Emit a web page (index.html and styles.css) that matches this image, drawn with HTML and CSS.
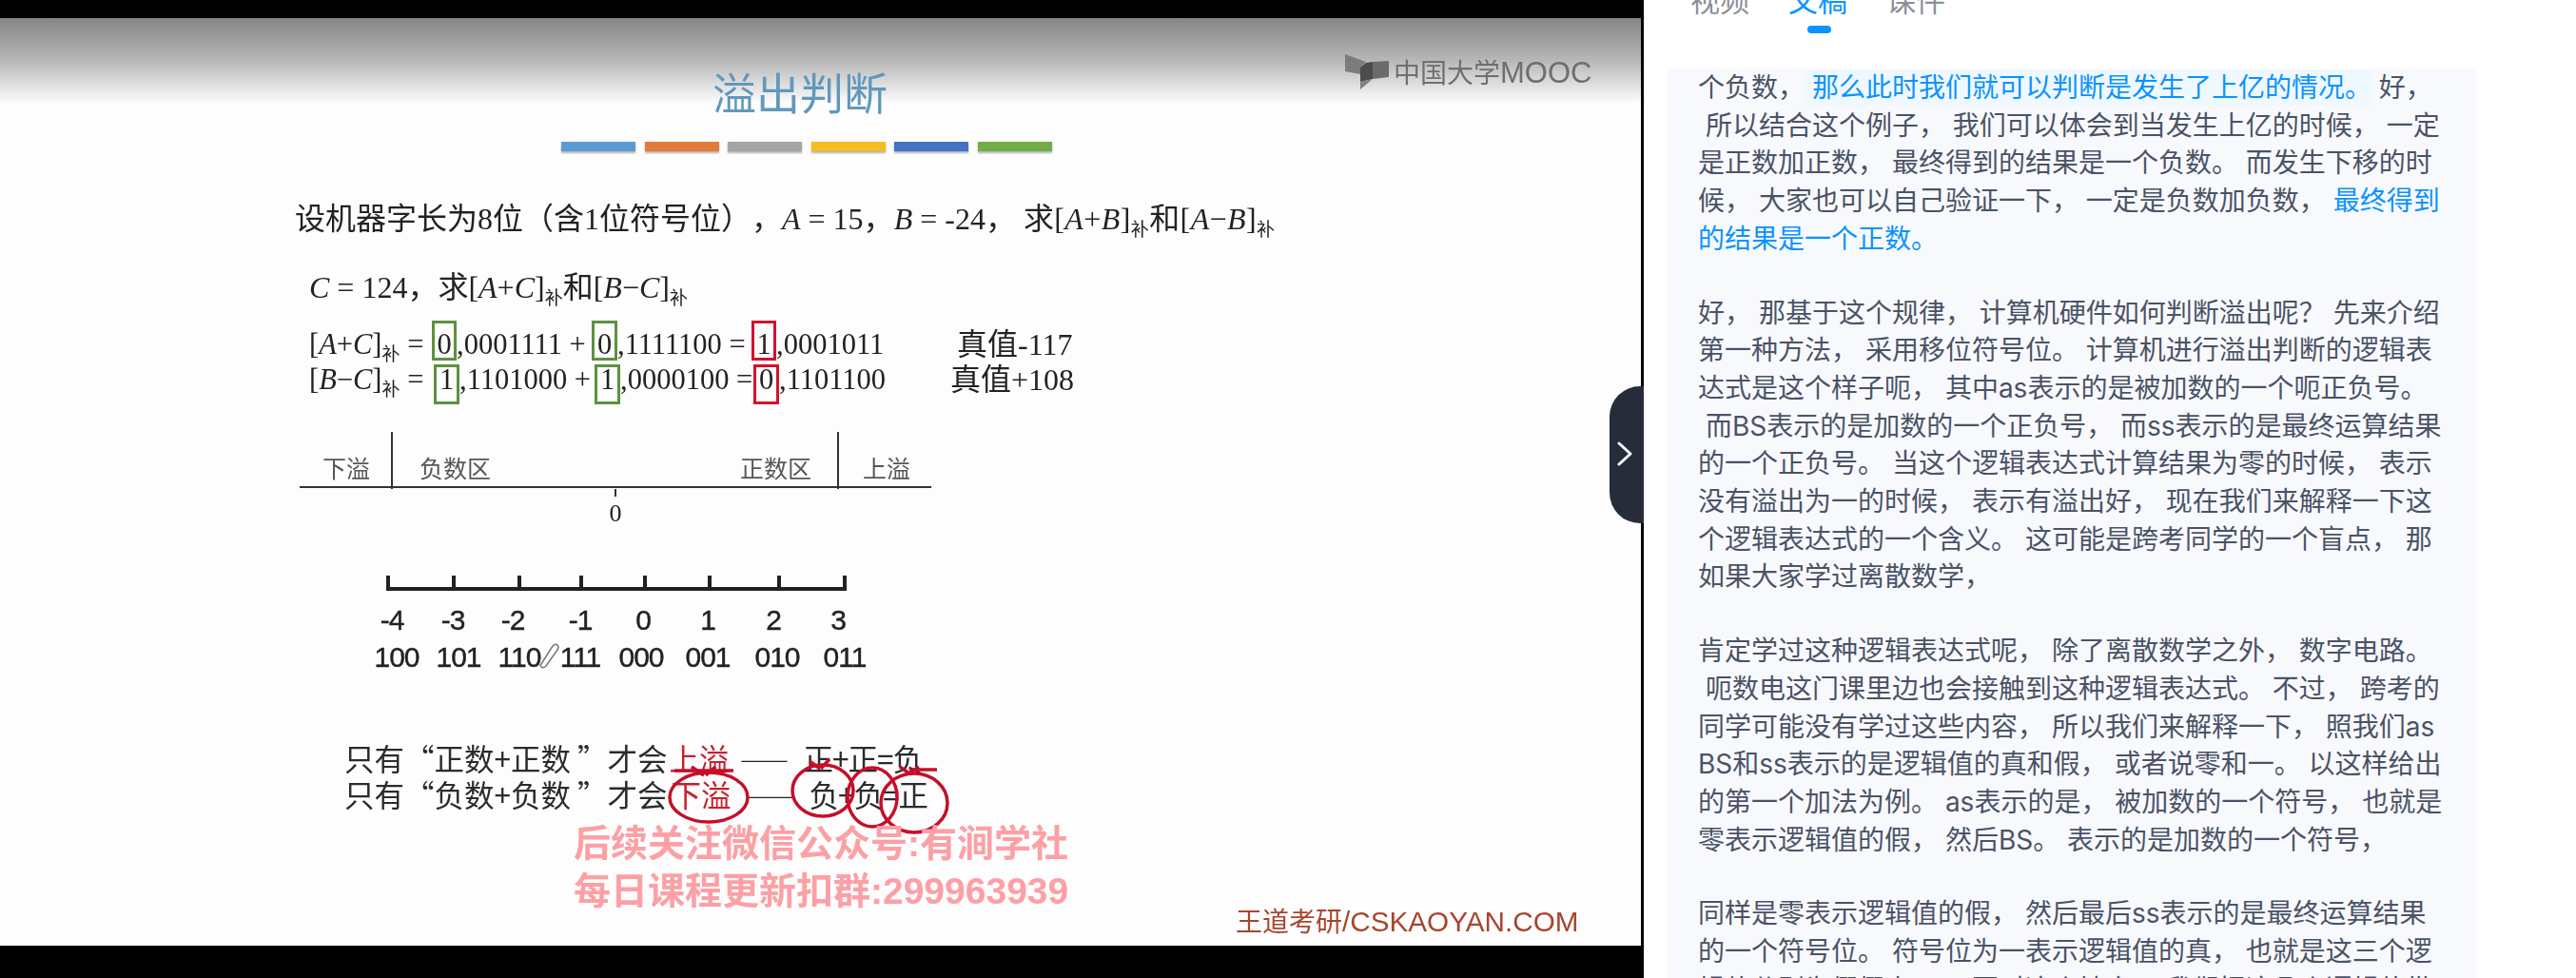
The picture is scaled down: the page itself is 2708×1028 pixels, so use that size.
FILE: index.html
```html
<!DOCTYPE html>
<html lang="zh-CN">
<head>
  <meta charset="UTF-8" />
  <meta name="viewport" content="width=device-width, initial-scale=1.0" />
  <title>溢出判断</title>
  <link rel="stylesheet" href="styles.css">
</head>
<body>
  <div class="player">
    <div class="slide">
      <h1 class="slide-title">溢出判断</h1>
      <div class="bars">
        <span class="bar bar-blue"></span>
        <span class="bar bar-orange"></span>
        <span class="bar bar-gray"></span>
        <span class="bar bar-yellow"></span>
        <span class="bar bar-navy"></span>
        <span class="bar bar-green"></span>
      </div>

      <p class="question q1">设机器字长为8位（含1位符号位），<i>A</i> = 15，<i>B</i> = -24，<span class="q1-tail">求[<i>A</i>+<i>B</i>]<span class="sub">补</span>和[<i>A</i>−<i>B</i>]<span class="sub">补</span></span></p>
      <p class="question q2"><i>C</i> = 124，求[<i>A</i>+<i>C</i>]<span class="sub">补</span>和[<i>B</i>−<i>C</i>]<span class="sub">补</span></p>

      <div class="formula row-a">
        <span>[<i>A</i>+<i>C</i>]<span class="sub">补</span> =</span>
        <span class="bit bit-ok">0</span>
        <span>,0001111 +</span>
        <span class="bit bit-ok">0</span>
        <span>,1111100 =</span>
        <span class="bit bit-bad">1</span>
        <span>,0001011</span>
        <span class="truth">真值-117</span>
      </div>
      <div class="formula row-b">
        <span>[<i>B</i>−<i>C</i>]<span class="sub">补</span> =</span>
        <span class="bit bit-ok">1</span>
        <span>,1101000 +</span>
        <span class="bit bit-ok">1</span>
        <span>,0000100 =</span>
        <span class="bit bit-bad">0</span>
        <span>,1101100</span>
        <span class="truth">真值+108</span>
      </div>

      <svg class="number-lines" viewBox="300 440 760 290" width="760" height="290">
        <path class="line-thin" d="M315 512H979M412 454V514M881 454V514M647 514V522" />
        <text class="zone" x="339" y="502">下溢</text>
        <text class="zone" x="441" y="502">负数区</text>
        <text class="zone" x="778" y="502">正数区</text>
        <text class="zone" x="907" y="502">上溢</text>
        <text class="zero" x="647" y="548">0</text>

        <path class="line-thick" d="M408 605V619H888V605M477 605V619M546 605V619M611 605V619M678 605V619M746 605V619M819 605V619" />
        <g class="values">
          <text x="412" y="662">-4</text>
          <text x="476" y="662">-3</text>
          <text x="539" y="662">-2</text>
          <text x="610" y="662">-1</text>
          <text x="676" y="662">0</text>
          <text x="744" y="662">1</text>
          <text x="813" y="662">2</text>
          <text x="881" y="662">3</text>
        </g>
        <g class="values">
          <text x="417" y="701">100</text>
          <text x="482" y="701">101</text>
          <text x="546" y="701">110</text>
          <text x="610" y="701">111</text>
          <text x="674" y="701">000</text>
          <text x="744" y="701">001</text>
          <text x="817" y="701">010</text>
          <text x="888" y="701">011</text>
        </g>
        <path class="clip" d="M569 698L581 679Q584 676 586 678Q588 680 586 683L574 700Q571 703 569 701Q567 699 569 698Z" />
      </svg>

      <p class="rule rule-first">只有“正数+正数 ”才会<span class="mark mark-up">上溢</span><span class="dash">——</span><span class="sum">正+正=负</span></p>
      <p class="rule">只有“负数+负数 ”才会<span class="mark mark-down">下溢</span><span class="dash dash-down">——</span><span class="sum">负+负=正</span></p>

      <svg class="ink" viewBox="0 19 1724 975">
        <path d="M709 810H771M956 809H985" />
        <ellipse cx="745" cy="838" rx="41" ry="26" />
        <ellipse cx="865" cy="831" rx="32" ry="27" />
        <ellipse cx="917" cy="838" rx="26" ry="31" />
        <ellipse cx="961" cy="844" rx="35" ry="31" />
        <path d="M727 806L740 815M752 806L742 815M851 800L862 808M872 798L863 808M946 806L956 813M966 806L956 813" />
      </svg>

      <div class="logo">
        <svg class="logo-icon" viewBox="0 0 46 38" width="46" height="38">
          <polygon fill="#7c7c7c" points="0,0 22,8 16,14 16,21 0,18" />
          <polygon fill="#6b6b6b" points="29,8 46,7 46,24 29,26" />
          <polygon fill="#4c4c4c" points="16,14 22,9 29,8 29,26 16,29" />
          <polygon fill="#808080" points="16,29 29,26 16,37" />
        </svg>
        <span class="logo-text">中国大学<span class="logo-mooc">MOOC</span></span>
      </div>

      <div class="watermark">
        <div>后续关注微信公众号:有涧学社</div>
        <div>每日课程更新扣群:299963939</div>
      </div>

      <div class="brand">王道考研<span class="brand-latin">/CSKAOYAN.COM</span></div>
    </div>

    <button class="collapse" aria-label="收起">
      <svg viewBox="0 0 16 26" width="16" height="26"><path d="M2 2L14 13L2 24" /></svg>
    </button>
  </div>

  <aside class="side">
    <nav class="tabs">
      <span class="tab">视频</span>
      <span class="tab tab-active">文稿</span>
      <span class="tab">课件</span>
    </nav>
    <div class="tab-dot"></div>

    <div class="transcript">
<p>个负数，<span class="hl hl-box"> 那么此时我们就可以判断是发生了上亿的情况。</span> 好，
 所以结合这个例子， 我们可以体会到当发生上亿的时候， 一定
是正数加正数， 最终得到的结果是一个负数。 而发生下移的时
候， 大家也可以自己验证一下， 一定是负数加负数， <span class="hl">最终得到
的结果是一个正数。</span></p>
<p>好， 那基于这个规律， 计算机硬件如何判断溢出呢？ 先来介绍
第一种方法， 采用移位符号位。 计算机进行溢出判断的逻辑表
达式是这个样子呃， 其中as表示的是被加数的一个呃正负号。
 而BS表示的是加数的一个正负号， 而ss表示的是最终运算结果
的一个正负号。 当这个逻辑表达式计算结果为零的时候， 表示
没有溢出为一的时候， 表示有溢出好， 现在我们来解释一下这
个逻辑表达式的一个含义。 这可能是跨考同学的一个盲点， 那
如果大家学过离散数学，</p>
<p>肯定学过这种逻辑表达式呢， 除了离散数学之外， 数字电路。
 呃数电这门课里边也会接触到这种逻辑表达式。 不过， 跨考的
同学可能没有学过这些内容， 所以我们来解释一下， 照我们as
BS和ss表示的是逻辑值的真和假， 或者说零和一。 以这样给出
的第一个加法为例。 as表示的是， 被加数的一个符号， 也就是
零表示逻辑值的假， 然后BS。 表示的是加数的一个符号，</p>
<p>同样是零表示逻辑值的假， 然后最后ss表示的是最终运算结果
的一个符号位。 符号位为一表示逻辑值的真， 也就是这三个逻
辑值分别为假假真。 只要对这个地方， 我们把这几个逻辑值带</p>
    </div>
  </aside>
</body>
</html>
```

FILE: styles.css
```css
* {
  box-sizing: border-box;
}
html, body {
  height: 100%;
}
body {
  margin: 0;
  display: flex;
  overflow: hidden;
  background-color: white;
  font-family: Inter, "Noto Sans CJK SC", sans-serif;
  text-spacing-trim: space-all;
}

/* player */
.player {
  position: relative;
  flex: none;
  width: 1728px;
  height: 100vh;
  padding: 19px 3px 34px 0;
  background-color: black;
}
.slide {
  position: relative;
  height: 975px;
  display: flex;
  flex-direction: column;
  overflow: hidden;
  color: #222;
  background: linear-gradient(#858585, #b8b8b8 45px, #fdfdfd 90px);
  font-family: "Liberation Serif", "Noto Sans CJK SC", serif;
  filter: blur(0.5px);
}
.slide p,
.slide h1 {
  margin: 0;
  white-space: pre;
}
.slide-title {
  margin: 53px 0 0 749px !important;
  color: #6198bd;
  font: 400 46px/46px "Noto Sans CJK SC", sans-serif;
}
.bars {
  display: flex;
  gap: 9.6px;
  margin: 31px 0 0 590px;
}
.bar {
  width: 78px;
  height: 10px;
  box-shadow: 0 2px 2px rgba(0, 0, 0, 0.3);
}
.bar-blue { background-color: #5b9bd5; }
.bar-orange { background-color: #e07b39; }
.bar-gray { background-color: #a5a5a5; }
.bar-yellow { background-color: #f5bd1f; }
.bar-navy { background-color: #4472c4; }
.bar-green { background-color: #70ad47; }

.question {
  font-size: 32px;
  line-height: 40px;
}
.q1 {
  margin: 51px 0 0 310px !important;
}
.q1-tail {
  margin-left: 8px;
  letter-spacing: 0.4px;
}
.q2 {
  margin: 32px 0 0 325px !important;
}
.sub {
  font-size: 19px;
  line-height: 0;
  vertical-align: -7px;
}
.formula {
  display: grid;
  height: 37px;
  margin-left: 325px;
  font-size: 30.5px;
  line-height: 37px;
  white-space: pre;
}
.row-a {
  margin-top: 22px;
  grid-template-columns: 129px 26px 142px 27px 141px 26px 190px auto;
}
.row-b {
  grid-template-columns: 131px 27px 142px 27px 140px 27px 180px auto;
}
.bit {
  height: 42px;
  border: 3px solid;
  line-height: 20px;
  text-align: center;
}
.bit-ok { border-color: #5d9140; }
.bit-bad { border-color: #d3122e; }
.row-a .bit {
  margin-top: -7px;
  padding-top: 12px;
}
.row-b .bit {
  margin-top: 2px;
  padding-top: 3px;
}
.truth {
  font-size: 32px;
}

.number-lines {
  flex: none;
  margin: 22px 0 0 300px;
}
.number-lines text {
  fill: #222;
}
.line-thin {
  fill: none;
  stroke: #333;
  stroke-width: 2;
}
.line-thick {
  fill: none;
  stroke: #222;
  stroke-width: 4;
}
.zone {
  font: 25px "Noto Sans CJK SC", sans-serif;
  fill: #555 !important;
}
.zero {
  font: 26px "Liberation Serif", serif;
  text-anchor: middle;
}
.values {
  font: 30px "Liberation Sans", sans-serif;
  letter-spacing: -1px;
  text-anchor: middle;
  stroke: #222;
  stroke-width: 0.4;
}
.clip {
  fill: white;
  stroke: #777;
  stroke-width: 1.5;
}

.rule {
  height: 38px;
  margin-left: 362px !important;
  font: 31.5px/38px "Noto Sans CJK SC", sans-serif;
  color: #2b2b2b;
}
.rule-first {
  margin-top: 47px !important;
}
.mark {
  color: #c8202f;
}
.mark-up {
  margin-left: 2px;
}
.mark-down {
  margin-left: 4px;
}
.dash {
  margin-left: 11px;
  color: #222;
  font-size: 26px;
  font-weight: 700;
}
.dash-down {
  margin-left: 15px;
}
.sum {
  margin-left: 15px;
  letter-spacing: -1px;
}

/* things drawn over the slide */
.ink {
  position: absolute;
  top: 0;
  left: 0;
  width: 1724px;
  height: 975px;
  fill: none;
  stroke: #c50f2a;
  stroke-width: 3.5;
}
.logo {
  position: absolute;
  top: 38px;
  left: 1414px;
  display: flex;
  gap: 5px;
  align-items: flex-start;
}
.logo-text {
  color: #6f6f6f;
  font: 28px/36px "Noto Sans CJK SC", sans-serif;
  white-space: nowrap;
}
.logo-mooc {
  font: 31px/36px "Liberation Sans", sans-serif;
}
.watermark {
  position: absolute;
  top: 843px;
  left: 603px;
  color: #fca0a5;
  font: 700 39px/50px "Liberation Sans", "Noto Sans CJK SC", sans-serif;
  white-space: nowrap;
}
.brand {
  position: absolute;
  top: 929px;
  left: 1299px;
  color: #a8452c;
  font: 28px/38px "Noto Sans CJK SC", sans-serif;
  white-space: nowrap;
}
.brand-latin {
  font: 29.7px/38px "Liberation Sans", sans-serif;
}
.collapse {
  position: absolute;
  top: 406px;
  left: 1692px;
  width: 36px;
  height: 144px;
  padding: 0 0 2px 8px;
  border: none;
  border-radius: 32px 0 0 32px;
  background-color: #262c3a;
}
.collapse svg {
  display: block;
  fill: none;
  stroke: white;
  stroke-width: 3;
  stroke-linecap: round;
  stroke-linejoin: round;
}

/* transcript side */
.side {
  flex: 1;
  min-width: 0;
  height: 100vh;
  overflow: hidden;
}
.tabs {
  display: flex;
  gap: 41px;
  height: 16px;
  padding-left: 49px;
  overflow: hidden;
  align-items: flex-end;
}
.tab {
  color: #8b9099;
  font-size: 31px;
  line-height: 30px;
}
.tab-active {
  color: #0a93ff;
}
.tab-dot {
  width: 25px;
  height: 8px;
  margin: 11px 0 0 172px;
  border-radius: 4px;
  background-color: #0a93ff;
}
.transcript {
  width: 851px;
  height: 956px;
  margin: 37px 0 0 24px;
  padding-left: 33px;
  overflow: hidden;
  background-color: #f8f9fd;
  color: #4a5366;
  font-size: 28px;
  line-height: 39.7px;
}
.transcript p {
  margin: 0 0 38px;
  white-space: pre;
}
.transcript p:first-child {
  margin-top: 1px;
}
.hl {
  color: #0a93ff;
}
.hl-box {
  padding: 2px 0;
  background-color: #f0f8ff;
}
```
